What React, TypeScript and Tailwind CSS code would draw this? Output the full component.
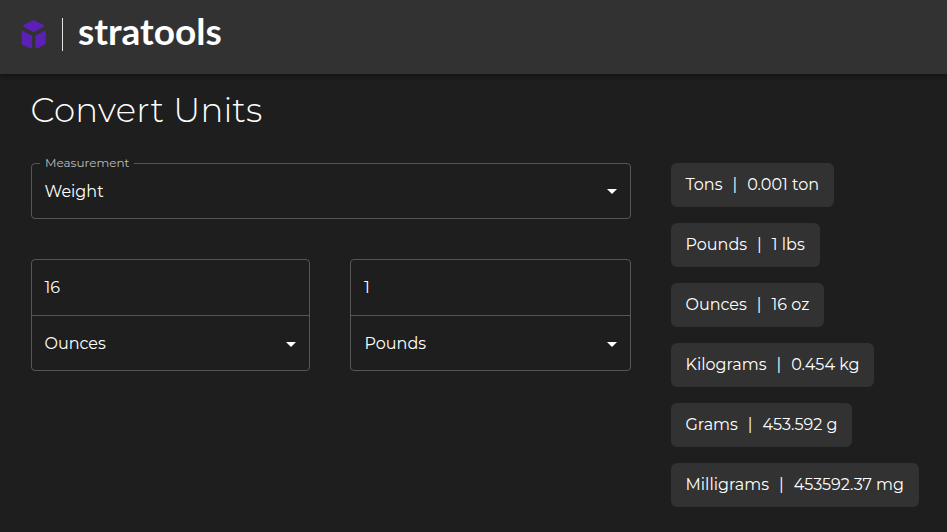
const conversions = [
  { unit: 'Tons', value: '0.001 ton' },
  { unit: 'Pounds', value: '1 lbs' },
  { unit: 'Ounces', value: '16 oz' },
  { unit: 'Kilograms', value: '0.454 kg' },
  { unit: 'Grams', value: '453.592 g' },
  { unit: 'Milligrams', value: '453592.37 mg' },
];

function Logo() {
  return (
    <svg className="h-[30px] w-[26px]" viewBox="21 19 26 30" fill="#5b21b6" stroke="#5b21b6" strokeWidth="2" strokeLinejoin="round">
      <path d="M33.6 21.1 43 25.7V26.1L33.6 31.1 24.4 26.1V25.7Z" />
      <path d="M22.7 32 31.1 36.4V47H29.8L22.7 43.6Z" />
      <path d="M44.7 32 36.3 36.4V47H37.6L44.7 43.6Z" />
    </svg>
  );
}

function Caret() {
  return (
    <svg className="size-6" viewBox="0 0 24 24" fill="#fff">
      <path d="M7 10l5 5 5-5z" />
    </svg>
  );
}

export default function App() {
  return (
    <div className="h-[532px] w-[947px] overflow-hidden bg-[#1e1e1e] font-['Montserrat','Inter',sans-serif] text-base text-white">
      <header className="flex h-[74px] items-start bg-[#323232] pl-[21px] shadow-[0_2px_5px_rgba(0,0,0,0.45)]">
        <div className="pt-[19px]"><Logo /></div>
        <div className="mt-[18px] ml-[15px] h-[33px] w-px bg-[#e4e4e4]" />
        <div className="mt-[7px] ml-[15px] font-['Lato',sans-serif] text-[37px] leading-[48px] font-bold">
          stratools
        </div>
      </header>
      <main className="px-[31px] pt-[12px]">
        <h1 className="-ml-[0.5px] h-[48px] text-[34px] leading-[48px] font-light tracking-[0.25px]">Convert Units</h1>
        <div className="mt-[29px] flex items-start gap-10">
          <div className="w-[600px]">
            <div className="relative flex h-[56px] items-center justify-between rounded border border-[#565656] pr-[6px] pl-[12.5px]">
              <span className="absolute -top-[9px] left-[8px] bg-[#1e1e1e] px-[5px] text-xs leading-4 text-[#bcbcbc]">Measurement</span>
              <span className="pt-px leading-[25px]">Weight</span>
              <Caret />
            </div>
            <div className="mt-10 flex gap-10">
              <div className="h-[112px] w-[279px] rounded border border-[#565656]">
                <div className="flex h-[55px] items-center pl-[12.5px]">16</div>
                <div className="flex h-[56px] items-center justify-between border-t border-[#565656] pr-[6px] pl-[12.5px]">
                  <span>Ounces</span>
                  <Caret />
                </div>
              </div>
              <div className="h-[112px] w-[281px] rounded border border-[#565656]">
                <div className="flex h-[55px] items-center pl-[13px]">1</div>
                <div className="flex h-[56px] items-center justify-between border-t border-[#565656] pr-[6px] pl-[13.5px]">
                  <span>Pounds</span>
                  <Caret />
                </div>
              </div>
            </div>
          </div>
          <div className="flex flex-col items-start gap-4">
            {conversions.map((c) => (
              <div key={c.unit} className="flex h-[44px] items-center gap-[10px] rounded-md bg-[#323232] pr-[14.8px] pl-[14.5px] whitespace-nowrap">
                <span>{c.unit}</span>
                <span>|</span>
                <span>{c.value}</span>
              </div>
            ))}
          </div>
        </div>
      </main>
    </div>
  );
}
